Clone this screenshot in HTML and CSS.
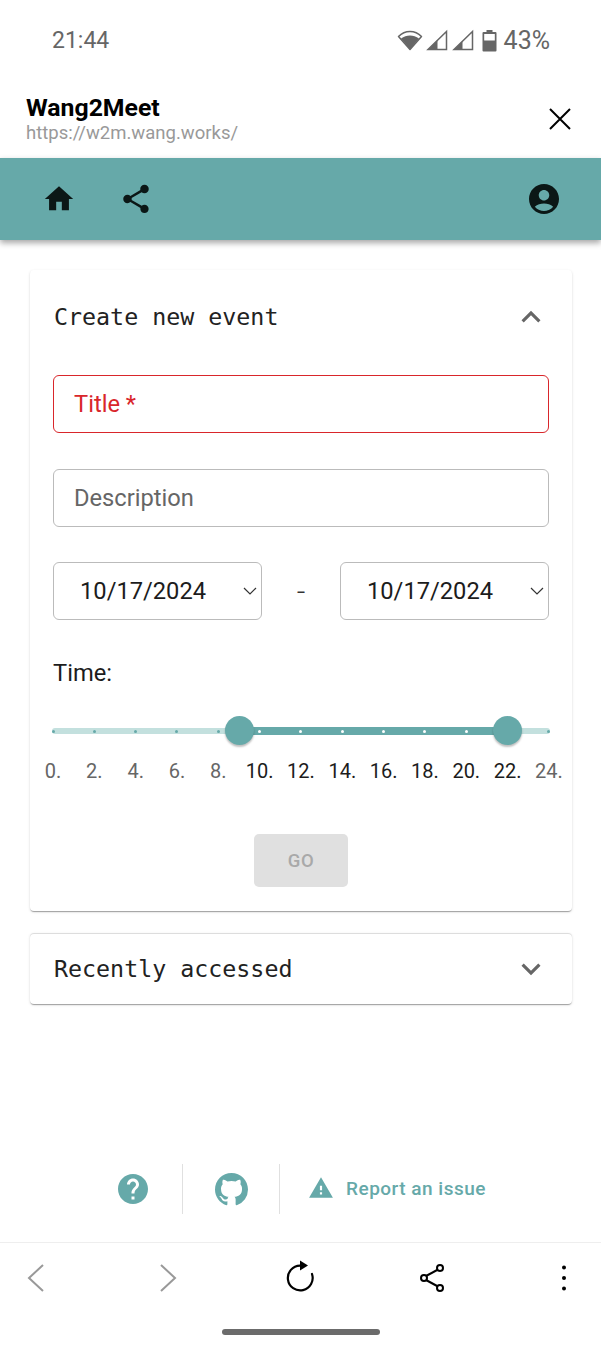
FILE: index.html
```html
<!DOCTYPE html>
<html lang="en">
<head>
  <meta charset="UTF-8">
  <meta name="viewport" content="width=device-width, initial-scale=1.0">
  <title>Wang2Meet</title>
  <link rel="stylesheet" href="styles.css">
</head>
<body>
  <div class="status-bar">
    <span class="clock">21:44</span>
    <div class="status-icons">
      <svg class="wifi" width="26" height="22" viewBox="0 0 26 22"><path d="M13 20.500 1.500 7.500C4.500 4.400 8.500 2.500 13 2.500s8.500 1.900 11.500 5z" fill="none" stroke="#666" stroke-width="1.500" stroke-linejoin="round"/><path d="M13 20.500 4 9.500C6.800 7.400 9.800 6.500 13 6.500s6.200.9 9 3z" fill="#666"/></svg>
      <svg class="signal" width="22" height="22" viewBox="0 0 22 22"><path d="M20.500 2.500v18H2z" fill="none" stroke="#666" stroke-width="1.500"/><path d="M11.500 11V20.500H2.500z" fill="#666"/></svg>
      <svg class="signal signal-last" width="22" height="22" viewBox="0 0 22 22"><path d="M20.500 2.500v18H2z" fill="none" stroke="#666" stroke-width="1.500"/><path d="M10.500 12V20.500H2.500z" fill="#666"/></svg>
      <svg class="battery" width="15" height="23" viewBox="0 0 15 23"><path d="M4.500 1h6v2h3a1 1 0 0 1 1 1v17.500a1 1 0 0 1-1 1h-12a1 1 0 0 1-1-1V4a1 1 0 0 1 1-1h3z" fill="#666"/><rect x="2.200" y="5" width="10.600" height="6.500" fill="#fff"/></svg>
      <span class="percent">43%</span>
    </div>
  </div>

  <div class="tab-header">
    <div class="tab-title">
      <div class="site-name">Wang2Meet</div>
      <div class="site-url">https://w2m.wang.works/</div>
    </div>
    <svg width="24" height="24" viewBox="0 0 24 24"><path d="M2 2l20 20M22 2 2 22" stroke="#000" stroke-width="2" fill="none"/></svg>
  </div>

  <header class="app-bar">
    <div class="app-bar-left">
      <svg width="34" height="34" viewBox="0 0 24 24"><path d="M10 20v-6h4v6h5v-8h3L12 3 2 12h3v8z" fill="#0b1716"/></svg>
      <svg width="34" height="34" viewBox="0 0 24 24"><path d="M18 16.080c-.76 0-1.440.3-1.960.77L8.910 12.700c.05-.23.09-.46.09-.7s-.04-.47-.09-.7l7.050-4.110c.54.5 1.250.81 2.040.81 1.660 0 3-1.340 3-3s-1.340-3-3-3-3 1.340-3 3c0 .24.04.47.09.7L8.040 9.810C7.500 9.310 6.790 9 6 9c-1.660 0-3 1.340-3 3s1.340 3 3 3c.79 0 1.500-.31 2.040-.81l7.120 4.160c-.05.21-.08.43-.08.65 0 1.610 1.310 2.920 2.920 2.920 1.610 0 2.920-1.310 2.920-2.920s-1.310-2.920-2.920-2.920z" fill="#0b1716"/></svg>
    </div>
    <svg width="36" height="36" viewBox="0 0 24 24"><path d="M12 2C6.480 2 2 6.480 2 12s4.480 10 10 10 10-4.480 10-10S17.520 2 12 2zm0 4c1.930 0 3.500 1.570 3.500 3.500S13.930 13 12 13s-3.500-1.570-3.500-3.500S10.070 6 12 6zm0 14c-2.030 0-4.430-.82-6.140-2.880C7.550 15.800 9.680 15 12 15s4.450.8 6.140 2.120C16.430 19.180 14.030 20 12 20z" fill="#0b1716"/></svg>
  </header>

  <main class="content">
    <section class="card card-open">
      <div class="card-head">
        <span class="card-title">Create new event</span>
        <svg width="38" height="38" viewBox="0 0 24 24"><path d="M12 8l-6 6 1.410 1.410L12 10.830l4.590 4.580L18 14z" fill="#666"/></svg>
      </div>
      <div class="form">
        <div class="field field-error">Title *</div>
        <div class="field">Description</div>
        <div class="date-row">
          <div class="date-select">
            <span>10/17/2024</span>
            <svg width="14" height="8" viewBox="0 0 14 8"><path d="M1 1l6 6 6-6" fill="none" stroke="#333" stroke-width="1.200"/></svg>
          </div>
          <span class="dash">-</span>
          <div class="date-select">
            <span>10/17/2024</span>
            <svg width="14" height="8" viewBox="0 0 14 8"><path d="M1 1l6 6 6-6" fill="none" stroke="#333" stroke-width="1.200"/></svg>
          </div>
        </div>
        <div class="time-label">Time:</div>
        <div class="slider">
          <div class="rail"></div>
          <div class="track"></div>
          <div class="dots" id="dots"></div>
          <div class="thumb thumb-start"></div>
          <div class="thumb thumb-end"></div>
        </div>
        <div class="marks" id="marks"></div>
      </div>
      <div class="go-row"><button class="go" disabled>GO</button></div>
    </section>

    <section class="card card-closed">
      <div class="card-head">
        <span class="card-title">Recently accessed</span>
        <svg width="38" height="38" viewBox="0 0 24 24"><path d="M16.590 8.590 12 13.170 7.410 8.590 6 10l6 6 6-6z" fill="#666"/></svg>
      </div>
    </section>
  </main>

  <footer class="footer">
    <div class="footer-item">
      <svg width="36" height="36" viewBox="0 0 24 24"><path d="M12 2C6.480 2 2 6.480 2 12s4.480 10 10 10 10-4.480 10-10S17.520 2 12 2zm1 17h-2v-2h2v2zm2.070-7.750-.9.920C13.450 12.900 13 13.500 13 15h-2v-.5c0-1.100.45-2.100 1.170-2.830l1.240-1.260c.37-.36.590-.86.590-1.410 0-1.100-.9-2-2-2s-2 .9-2 2H8c0-2.210 1.790-4 4-4s4 1.790 4 4c0 .88-.36 1.680-.93 2.250z" fill="#66a9a9"/></svg>
    </div>
    <div class="footer-item footer-github">
      <svg width="33" height="33" viewBox="0 0 16 16"><path d="M8 0C3.580 0 0 3.580 0 8c0 3.540 2.290 6.530 5.470 7.590.4.070.55-.17.55-.38 0-.19-.01-.82-.01-1.490-2.010.37-2.530-.49-2.690-.94-.09-.23-.48-.94-.82-1.130-.28-.15-.68-.52-.01-.53.630-.01 1.080.58 1.230.82.720 1.210 1.870.87 2.330.66.070-.52.280-.87.510-1.070-1.780-.2-3.640-.89-3.640-3.950 0-.87.310-1.590.82-2.150-.08-.2-.36-1.020.08-2.120 0 0 .67-.21 2.200.82.640-.18 1.320-.27 2-.27s1.360.09 2 .27c1.530-1.040 2.200-.82 2.200-.82.440 1.100.16 1.920.08 2.120.51.56.82 1.270.82 2.150 0 3.070-1.870 3.750-3.650 3.950.29.250.54.730.54 1.480 0 1.070-.01 1.930-.01 2.200 0 .21.150.46.550.38A8.010 8.010 0 0 0 16 8c0-4.420-3.580-8-8-8z" fill="#66a9a9"/></svg>
    </div>
    <div class="footer-item footer-report">
      <svg width="26" height="26" viewBox="0 0 24 24"><path d="M1 21h22L12 2 1 21zm12-3h-2v-2h2v2zm0-4h-2v-4h2v4z" fill="#66a9a9"/></svg>
      <span>Report an issue</span>
    </div>
  </footer>

  <nav class="browser-bar">
    <svg width="30" height="36" viewBox="0 0 30 36"><path d="M22 5 8 18l14 13" fill="none" stroke="#999" stroke-width="2"/></svg>
    <svg width="30" height="36" viewBox="0 0 30 36"><path d="M8 5l14 13L8 31" fill="none" stroke="#999" stroke-width="2"/></svg>
    <svg width="30" height="36" viewBox="0 0 30 36"><path d="M15 5.600A12.400 12.400 0 1 0 27 14" fill="none" stroke="#000" stroke-width="2.200" stroke-linecap="round"/><path d="M15 .5l8 5-8 5z" fill="#000"/></svg>
    <svg width="30" height="36" viewBox="0 0 30 36"><path d="M9 16 21 9.500M9 20l12 6.500" stroke="#000" stroke-width="2"/><circle cx="7" cy="18" r="3" fill="#fff" stroke="#000" stroke-width="2"/><circle cx="23" cy="8" r="3" fill="#fff" stroke="#000" stroke-width="2"/><circle cx="23" cy="28" r="3" fill="#fff" stroke="#000" stroke-width="2"/></svg>
    <svg width="30" height="36" viewBox="0 0 30 36"><circle cx="15" cy="7.500" r="2"/><circle cx="15" cy="18" r="2"/><circle cx="15" cy="28.500" r="2"/></svg>
  </nav>
  <div class="gesture-area"><div class="gesture-pill"></div></div>

  <script>
    // hours 0..24 in steps of 2, selected range is 9..22
    const dots = document.getElementById('dots');
    const marks = document.getElementById('marks');
    for (let h = 0; h <= 24; h += 2) {
      const inRange = h >= 9 && h <= 22;
      const dot = document.createElement('i');
      dot.className = inRange ? 'dot dot-on' : 'dot';
      dots.appendChild(dot);

      const mark = document.createElement('span');
      mark.className = inRange ? 'mark mark-on' : 'mark';
      mark.textContent = h + '.';
      marks.appendChild(mark);
    }
  </script>
</body>
</html>
```

FILE: styles.css
```css
* {
  box-sizing: border-box;
}

body {
  margin: 0;
  width: 601px;
  height: 1350px;
  overflow: hidden;
  display: flex;
  flex-direction: column;
  background-color: #fff;
  font-family: Roboto, sans-serif;
  color: #1c1c1c;
}

.status-bar {
  height: 80px;
  flex: none;
  display: flex;
  justify-content: space-between;
  align-items: center;
  padding: 0 51px 0 52px;
  color: #666;
  font-size: 23px;
}

.status-icons {
  display: flex;
  align-items: center;
}

.status-icons .wifi {
  margin-right: 3px;
}

.status-icons .signal {
  margin-right: 4px;
}

.status-icons .signal-last {
  margin-right: 8px;
}

.status-icons .battery {
  margin-right: 7px;
}

.percent {
  font-size: 25px;
}

.tab-header {
  height: 78px;
  flex: none;
  display: flex;
  justify-content: space-between;
  align-items: center;
  padding: 0 29px 0 26px;
}

.site-name {
  font-size: 24.800px;
  font-weight: 700;
  line-height: 28px;
  color: #000;
}

.site-url {
  font-size: 18.500px;
  line-height: 22px;
  color: #999;
}

.app-bar {
  height: 82px;
  flex: none;
  display: flex;
  justify-content: space-between;
  align-items: center;
  padding: 0 39px 0 42px;
  background-color: #66a9a9;
  box-shadow: 0 3px 6px rgba(0, 0, 0, 0.35);
  position: relative;
}

.app-bar-left {
  display: flex;
  align-items: center;
  gap: 43px;
}

.content {
  flex: 1;
  padding: 30px 29px 0 30px;
}

.card {
  background-color: #fff;
  border-radius: 4px;
  box-shadow: 0 2px 1px -1px rgba(0, 0, 0, 0.2), 0 1px 1px rgba(0, 0, 0, 0.14), 0 1px 3px rgba(0, 0, 0, 0.12);
}

.card-open {
  height: 641px;
  margin-bottom: 22px;
}

.card-closed {
  height: 71px;
  box-shadow: inset 0 1px 0 #ddd, 0 2px 1px -1px rgba(0, 0, 0, 0.2), 0 1px 1px rgba(0, 0, 0, 0.14), 0 1px 3px rgba(0, 0, 0, 0.12);
}

.card-head {
  height: 71px;
  padding: 0 22px 0 24px;
  display: flex;
  justify-content: space-between;
  align-items: center;
}

.card-open .card-head {
  height: 93px;
}

.card-title {
  font-family: "DejaVu Sans Mono", monospace;
  font-size: 23.300px;
  color: #222;
}

.form {
  padding: 12px 23px 0;
}

.field {
  height: 58px;
  margin-bottom: 36px;
  padding: 0 20px;
  display: flex;
  align-items: center;
  border: 1px solid #bbb;
  border-radius: 6px;
  font-size: 23.700px;
  color: #666;
}

.field-error {
  border-color: #d9262b;
  color: #d9262b;
}

.date-row {
  display: flex;
  justify-content: space-between;
  align-items: center;
  margin-top: -1px;
}

.date-select {
  width: 209px;
  height: 58px;
  padding: 0 4px 0 26px;
  display: flex;
  justify-content: space-between;
  align-items: center;
  border: 1px solid #bbb;
  border-radius: 6px;
  font-size: 23.700px;
}

.dash {
  font-size: 30px;
  font-weight: 300;
  color: #333;
}

.time-label {
  margin-top: 39px;
  font-size: 23.700px;
  line-height: 28px;
}

.slider {
  position: relative;
  height: 10px;
  margin-top: 39px;
}

.rail {
  position: absolute;
  left: -1px;
  right: -1px;
  top: 2px;
  height: 6px;
  border-radius: 3px;
  background-color: #c3e0de;
}

.track {
  position: absolute;
  left: 186px;
  width: 268px;
  top: 1px;
  height: 8px;
  background-color: #66a9a9;
}

.dots {
  position: absolute;
  left: -1.500px;
  right: -1.500px;
  top: 3.500px;
  display: flex;
  justify-content: space-between;
}

.dot {
  width: 3px;
  height: 3px;
  border-radius: 50%;
  background-color: #66a9a9;
}

.dot-on {
  background-color: #fff;
}

.thumb {
  position: absolute;
  top: -10px;
  width: 29px;
  height: 29px;
  border-radius: 50%;
  background-color: #66a9a9;
  box-shadow: 0 2px 2px rgba(0, 0, 0, 0.25);
}

.thumb-start {
  left: 172px;
}

.thumb-end {
  left: 440px;
}

.marks {
  display: flex;
  justify-content: space-between;
  margin: 23px -20px 0;
}

.mark {
  width: 40px;
  text-align: center;
  font-size: 20px;
  line-height: 24px;
  color: #666;
}

.mark-on {
  color: #1c1c1c;
}

.go-row {
  display: flex;
  justify-content: center;
  margin-top: 51px;
}

.go {
  width: 94px;
  height: 53px;
  border: none;
  border-radius: 5px;
  background-color: #e0e0e0;
  color: #a9a9a9;
  font-family: Roboto, sans-serif;
  font-size: 18.500px;
  font-weight: 500;
  letter-spacing: 0.5px;
}

.footer {
  flex: none;
  height: 50px;
  margin-bottom: 28px;
  padding-left: 84px;
  display: flex;
  align-items: stretch;
}

.footer-item {
  display: flex;
  align-items: center;
  justify-content: center;
  width: 99px;
  border-right: 1px solid #e0e0e0;
}

.footer-github {
  width: 97px;
}

.footer-report {
  width: auto;
  border-right: none;
  padding-left: 28px;
  padding-bottom: 2px;
  gap: 12px;
  color: #66a9a9;
  font-size: 19px;
  font-weight: 500;
  letter-spacing: 0.5px;
}

.browser-bar {
  flex: none;
  height: 72px;
  padding: 0 22px 2px 21px;
  display: flex;
  justify-content: space-between;
  align-items: center;
  border-top: 1px solid #eee;
}

.gesture-area {
  flex: none;
  height: 36px;
  display: flex;
  justify-content: center;
}

.gesture-pill {
  width: 158px;
  height: 6px;
  margin-top: 15px;
  border-radius: 3px;
  background-color: #6b6b6b;
}
```
